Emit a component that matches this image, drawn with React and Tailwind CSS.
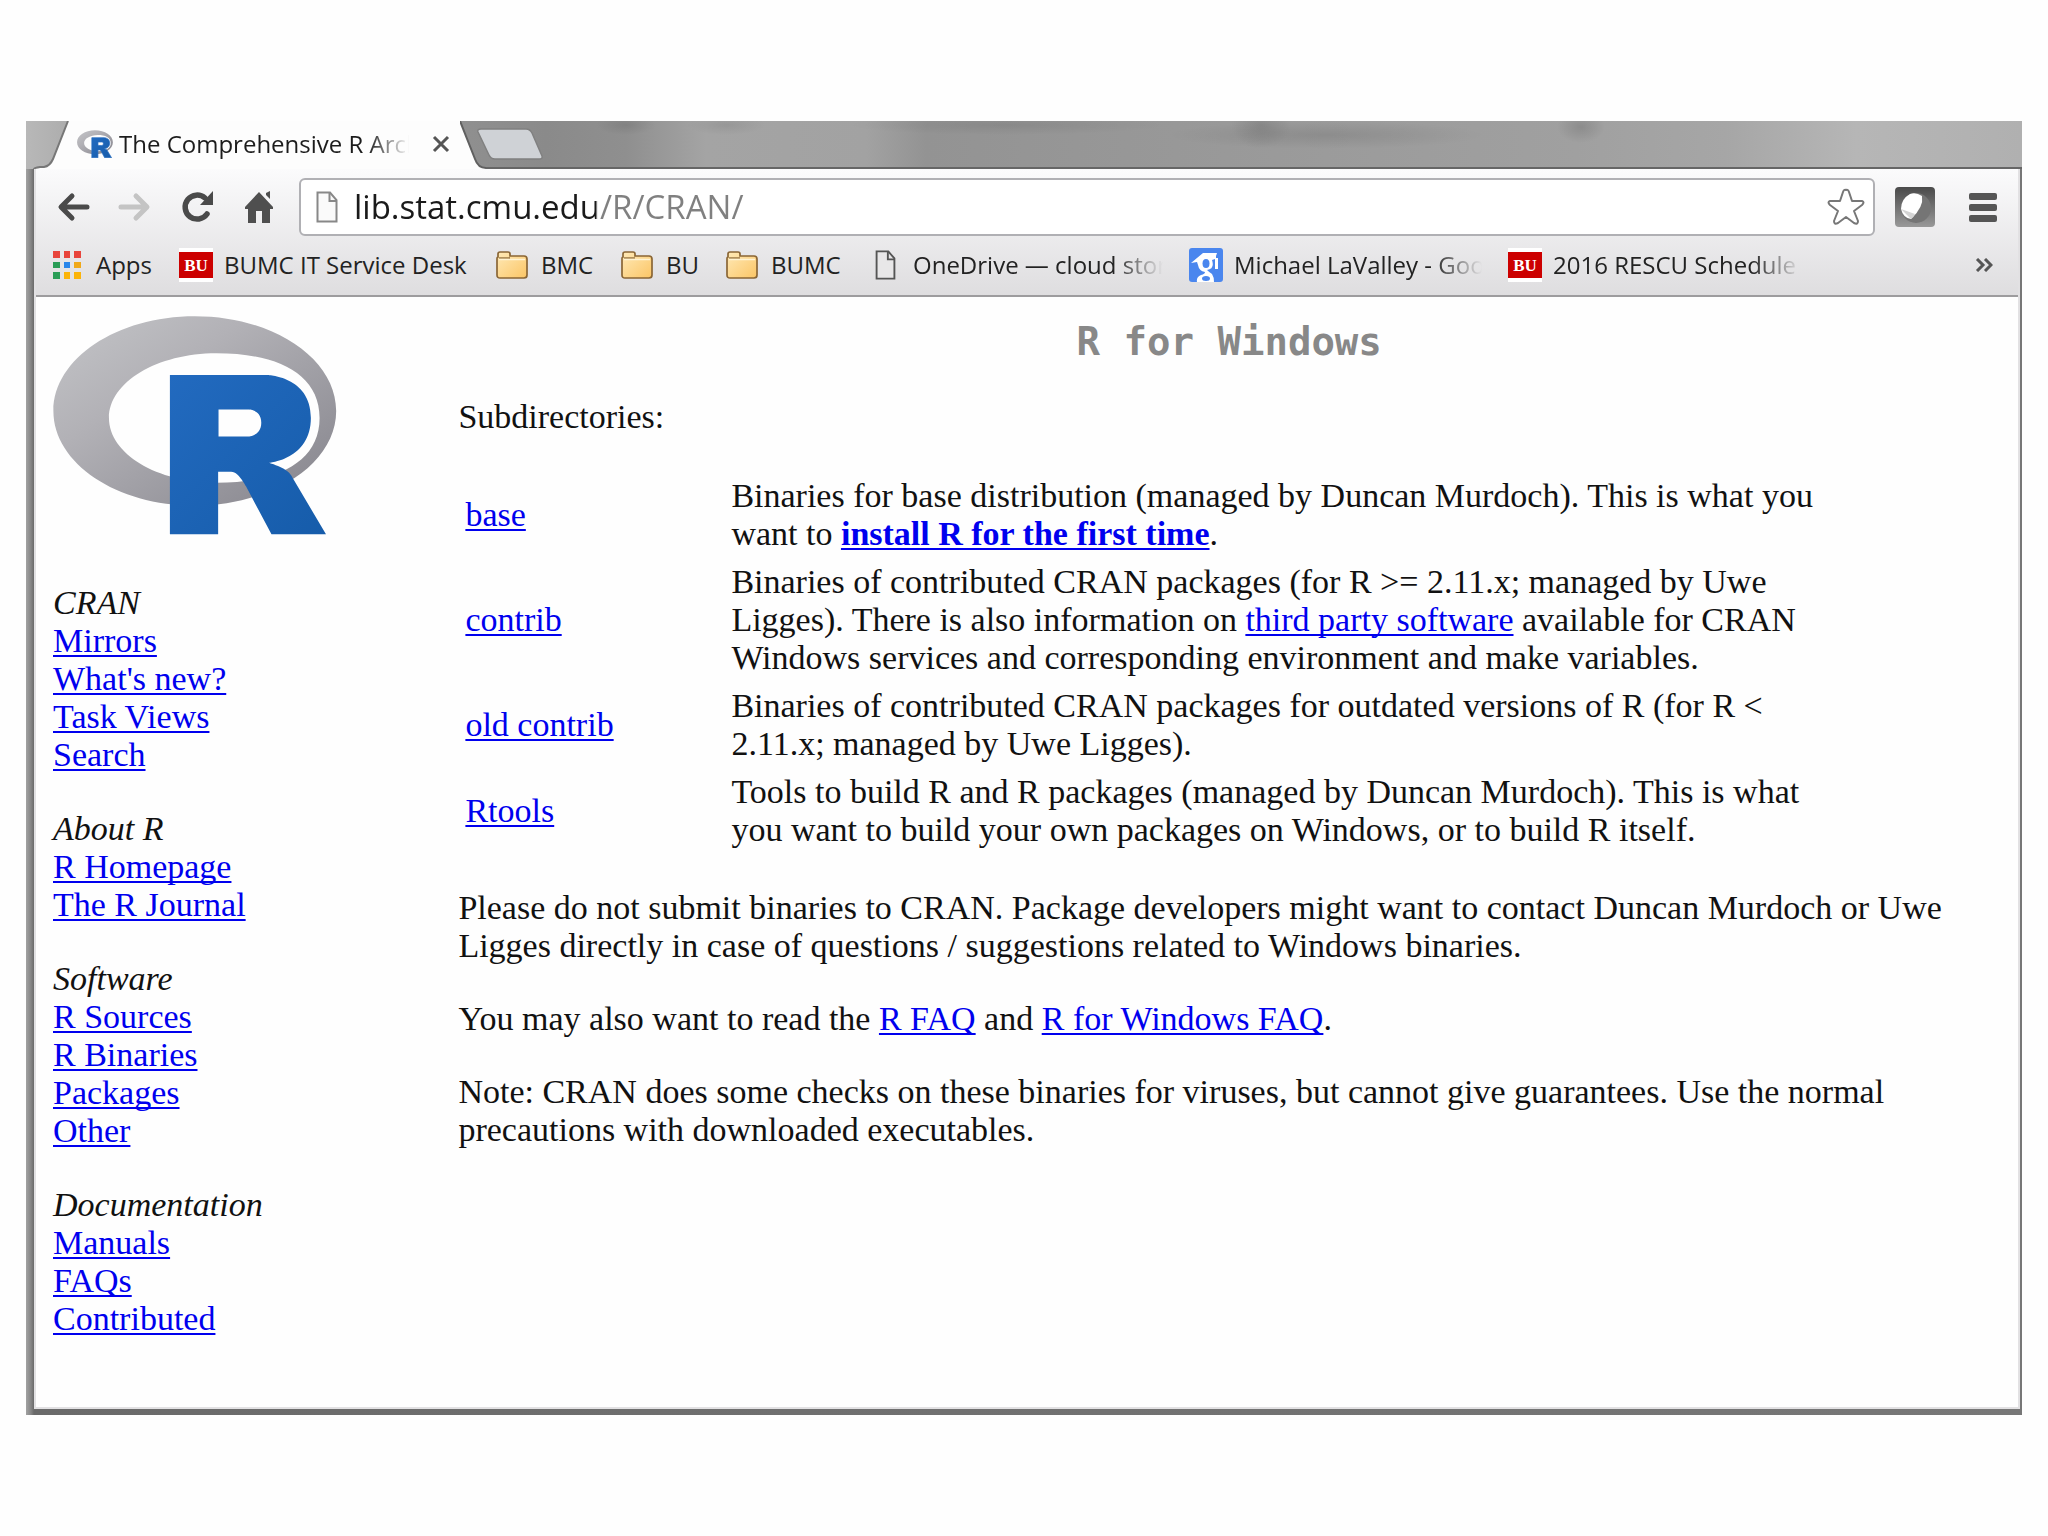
const SANS = 'font-["Open_Sans","Noto_Sans",sans-serif]';

function RLogo({ className, id, flat }) {
  return (
    <svg viewBox="0 0 724 561" className={className} role="img" aria-label="R logo">
      <defs>
        <linearGradient id={id + 'g'} x1="0" y1="0" x2="1" y2="1">
          <stop offset="0" stopColor="#c4c5c8" />
          <stop offset="0.35" stopColor="#b2b1b6" />
          <stop offset="1" stopColor="#84838b" />
        </linearGradient>
        <linearGradient id={id + 'b'} x1="0" y1="0" x2="1" y2="1">
          <stop offset="0" stopColor="#226abf" />
          <stop offset="1" stopColor="#165caa" />
        </linearGradient>
      </defs>
      <path
        fill={`url(#${id}g)`}
        fillRule="evenodd"
        d="M361.5 486C162.300 486 .9 377.800 .9 244.500S162.300 3 361.500 3 722 111.100 722 244.500 560.600 486 361.500 486ZM416.600 97.400C265.300 97.400 142.600 171.300 142.600 262.500S265.300 427.600 416.600 427.600 679.700 377 679.700 262.500 568 97.400 416.600 97.400Z"
      />
      <path
        fill={`url(#${id}b)`}
        stroke={flat ? '#276dc3' : 'none'}
        strokeWidth={flat ? 14 : 0}
        fillRule="evenodd"
        d="M550 377s21.800 6.600 34.500 13c4.400 2.200 12 6.700 17.500 12.500 5.400 5.700 8 11.500 8 11.500l86 145H557l-65-122s-13.300-22.900-21.500-29.500c-6.800-5.500-9.700-7.500-16.500-7.500h-33v159H298V153h247s112.500 2 112.500 109S550 377 550 377Zm-53.500-136H422v69h74.500s34.500-.1 34.500-35.100c0-35.700-34.500-33.900-34.500-33.900Z"
      />
    </svg>
  );
}

function PageIcon({ className, fill = '#fafafa', stroke = '#777' }) {
  return (
    <svg viewBox="0 0 22 32" className={className} aria-hidden="true">
      <path d="M1.500 1.500H14L20.500 9V30.500H1.500Z" fill={fill} stroke={stroke} strokeWidth="2" />
      <path d="M13.500 1.500V10H20.500" fill="none" stroke={stroke} strokeWidth="2" />
    </svg>
  );
}

function FolderIcon() {
  return (
    <svg viewBox="0 0 32 28" className="h-7 w-8 shrink-0" aria-hidden="true">
      <defs>
        <linearGradient id="folder" x1="0" y1="0" x2="1" y2="1">
          <stop offset="0" stopColor="#ffeab8" />
          <stop offset="1" stopColor="#fbc565" />
        </linearGradient>
      </defs>
      <path d="M2 6V3Q2 1 4 1H12Q14 1 14 3V5H28Q31 5 31 8V24Q31 27 28 27H4Q1 27 1 24V8Q1 6 2 6Z" fill="url(#folder)" stroke="#8a6635" strokeWidth="1.700" />
      <path d="M3 7H14" stroke="#8a6635" strokeWidth="1.300" />
      <path d="M3 8.500H29" stroke="#fff3d2" strokeWidth="1.500" />
    </svg>
  );
}

function BuIcon() {
  return (
    <span aria-hidden="true" className="flex h-[34px] w-[34px] shrink-0 flex-col justify-center bg-white">
      <span className='flex h-[26px] items-center justify-center bg-[#cc0000] font-["Liberation_Serif",serif] text-[17px] leading-none font-bold text-white'>
        BU
      </span>
    </span>
  );
}

function ScholarIcon() {
  return (
    <svg viewBox="0 0 34 34" className="h-[34px] w-[34px] shrink-0" aria-hidden="true">
      <rect width="34" height="34" rx="3" fill="#4a86ee" />
      <path d="M2 15L14 5H28L27 8V10H29V21H26V11L23 12Q26 21 18 22Q20 24 23 26Q25 29 25 34H8Q7 29 12 27Q16 26 16 24Q10 23 9 17L8 14Z" fill="#fff" />
      <ellipse cx="17" cy="15.500" rx="3.500" ry="4.500" fill="#4a86ee" />
      <ellipse cx="17" cy="30.500" rx="4" ry="2.500" fill="#4a86ee" />
    </svg>
  );
}

function AppsIcon() {
  const colors = ['#e8453c', '#e8453c', '#e8453c', '#2a9d57', '#2a86ea', '#f0a818', '#2a9d57', '#fbb40a', '#fbb40a'];
  return (
    <span aria-hidden="true" className="grid h-7 w-7 shrink-0 grid-cols-3 gap-1">
      {colors.map((c, i) => (
        <span key={i} style={{ backgroundColor: c }} />
      ))}
    </span>
  );
}

const FADE = '[mask-image:linear-gradient(to_right,black_80%,transparent)]';

const bookmarks = [
  { label: 'Apps', icon: <AppsIcon />, width: 'w-[57px]', gap: 'gap-[15px]' },
  { label: 'BUMC IT Service Desk', icon: <BuIcon />, width: 'w-[246px]', gap: 'gap-[11px]' },
  { label: 'BMC', icon: <FolderIcon />, width: 'w-[54px]', gap: 'gap-[13px]' },
  { label: 'BU', icon: <FolderIcon />, width: 'w-[34px]', gap: 'gap-[13px]' },
  { label: 'BUMC', icon: <FolderIcon />, width: 'w-[74px]', gap: 'gap-[13px]' },
  { label: 'OneDrive — cloud storage', icon: <PageIcon className="mx-1 h-[30px] w-[21px] shrink-0" fill="#e8e7e8" stroke="#555" />, width: 'w-[250px]', gap: 'gap-[13px]', fade: true },
  { label: 'Michael LaValley - Google', icon: <ScholarIcon />, width: 'w-[248px]', gap: 'gap-[11px]', fade: true },
  { label: '2016 RESCU Schedule', icon: <BuIcon />, width: 'w-[248px]', gap: 'gap-[11px]', fade: true },
];

const navGroups = [
  { title: 'CRAN', links: ['Mirrors', "What's new?", 'Task Views', 'Search'] },
  { title: 'About R', links: ['R Homepage', 'The R Journal'] },
  { title: 'Software', links: ['R Sources', 'R Binaries', 'Packages', 'Other'] },
  { title: 'Documentation', links: ['Manuals', 'FAQs', 'Contributed'] },
];

function Link({ children, className = '' }) {
  return (
    <a href="#" className={`text-[#0000ee] underline decoration-2 underline-offset-[3px] [text-decoration-skip-ink:none] ${className}`}>
      {children}
    </a>
  );
}

const directories = [
  {
    name: 'base',
    text: (
      <>
        Binaries for base distribution (managed by Duncan Murdoch). This is what you want to{' '}
        <Link className="font-bold">install R for the first time</Link>.
      </>
    ),
  },
  {
    name: 'contrib',
    text: (
      <>
        Binaries of contributed CRAN packages (for R &gt;= 2.11.x; managed by Uwe Ligges). There is also information on{' '}
        <Link>third party software</Link> available for CRAN Windows services and corresponding environment and make variables.
      </>
    ),
  },
  {
    name: 'old contrib',
    text: 'Binaries of contributed CRAN packages for outdated versions of R (for R < 2.11.x; managed by Uwe Ligges).',
  },
  {
    name: 'Rtools',
    text: 'Tools to build R and R packages (managed by Duncan Murdoch). This is what you want to build your own packages on Windows, or to build R itself.',
  },
];

function TabStrip() {
  return (
    <div className="flex h-12 bg-[radial-gradient(ellipse_160px_14px_at_1300px_14px,#00000018,transparent),radial-gradient(ellipse_30px_24px_at_1235px_4px,#0000001c,transparent),radial-gradient(ellipse_24px_16px_at_1555px_6px,#00000020,transparent),radial-gradient(ellipse_30px_10px_at_600px_4px,#00000018,transparent),radial-gradient(ellipse_40px_10px_at_700px_4px,#00000014,transparent),radial-gradient(ellipse_160px_10px_at_980px_4px,#00000014,transparent),linear-gradient(to_right,#b8b8b8_0,#a8a8a8_60px,#8a8a8a_520px,#8f8f8f_600px,#a4a4a4_680px,#a2a2a2_840px,#939393_900px,#999_1200px,#a0a0a0_1550px,#a6a6a6_1700px,#b6b6b6_1830px,#b0b0b0)] pl-[7px]">
      <svg viewBox="0 0 36 48" className="h-12 w-9 shrink-0" aria-hidden="true">
        <path d="M36 0H35L20 38Q17 45 11 46H7Q1 47 1 48H36Z" fill="#fdfdfd" />
        <path d="M35 0L20 38Q17 45 11 46H7Q1 47 1 48" fill="none" stroke="#777" strokeWidth="2" />
      </svg>
      <div role="tab" className="flex w-[391px] shrink-0 items-center bg-[#fdfdfd] pb-0.5 pl-2">
        <RLogo className="h-7 w-9 shrink-0" id="fav" flat />
        <span className="ml-[6px] w-[296px] overflow-hidden text-[24px] leading-8 whitespace-nowrap text-[#1c1c1c] [mask-image:linear-gradient(to_right,black_84%,transparent_98%)]">
          The Comprehensive R Archive
        </span>
        <button type="button" aria-label="Close tab" className="ml-[17px] shrink-0">
          <svg viewBox="0 0 18 18" className="h-[18px] w-[18px]" aria-hidden="true">
            <path d="M2 2L16 16M16 2L2 16" stroke="#555" strokeWidth="3" />
          </svg>
        </button>
      </div>
      <svg viewBox="0 0 26 48" className="h-12 w-[26px] shrink-0" aria-hidden="true">
        <path d="M0 0L15 38Q18 47 26 47V48H0Z" fill="#fdfdfd" />
        <path d="M0 0L15 38Q18 47 26 47" fill="none" stroke="#606060" strokeWidth="2" />
      </svg>
      <div className="flex grow border-b-2 border-[#666]">
        <button type="button" aria-label="New tab" className="mt-[7px] -ml-[10px] h-8">
          <svg viewBox="0 0 68 32" className="h-8 w-[68px]" aria-hidden="true">
            <path d="M5 1H50Q54 1 56 5L66 28Q67 31 63 31H19Q15 31 13 27L2 4Q1 1 5 1Z" fill="#cfd2d6" stroke="#808080" strokeWidth="1.500" />
          </svg>
        </button>
      </div>
    </div>
  );
}

function Toolbar() {
  return (
    <div className="flex h-[72px] items-center pt-1 pr-[21px] pl-5">
      <div className="flex shrink-0 items-center">
        <button type="button" aria-label="Back">
          <svg viewBox="0 0 34 32" className="h-8 w-[34px]" fill="none" stroke="#4a4a4a" strokeWidth="5" strokeLinecap="round" strokeLinejoin="round">
            <path d="M16 5L5 16L16 27M6 16H31" />
          </svg>
        </button>
        <button type="button" aria-label="Forward" className="ml-7" disabled>
          <svg viewBox="0 0 34 32" className="h-8 w-[34px]" fill="none" stroke="#c4c4c4" strokeWidth="5" strokeLinecap="round" strokeLinejoin="round">
            <path d="M18 5L29 16L18 27M28 16H3" />
          </svg>
        </button>
        <button type="button" aria-label="Reload" className="ml-7">
          <svg viewBox="0 0 34 32" className="h-8 w-[34px]">
            <path d="M27 23A12 12 0 1 1 25 7" fill="none" stroke="#4a4a4a" strokeWidth="5.500" strokeLinecap="round" />
            <path d="M33 0V14H20Z" fill="#4a4a4a" />
          </svg>
        </button>
        <button type="button" aria-label="Home" className="ml-[30px]">
          <svg viewBox="0 0 30 32" className="h-8 w-[30px]">
            <path d="M15 1L29 16V18H26V32H18V20H12V32H4V18H1V16Z" fill="#4f4f4f" />
            <path d="M22 2L26 0V8L22 4Z" fill="#4f4f4f" />
          </svg>
        </button>
      </div>
      <form className="ml-[25px] flex h-[58px] grow items-center rounded-md border-2 border-[#b0b0b4] bg-white pr-2 pl-[15px]">
        <PageIcon className="h-8 w-[22px] shrink-0" stroke="#888" />
        <input
          type="text"
          aria-label="Address"
          defaultValue="lib.stat.cmu.edu/R/CRAN/"
          className="ml-4 min-w-0 grow bg-[linear-gradient(to_right,#1a1a1a_242px,#808080_242px)] bg-clip-text text-[33px] leading-10 text-transparent outline-none"
        />
        <button type="button" aria-label="Bookmark this page">
          <svg viewBox="0 0 38 38" className="h-[38px] w-[38px]" fill="#fff" stroke="#777" strokeWidth="2" strokeLinejoin="round">
            <path d="M19 2Q21 1 22 4L25 13L35 13Q38 14 35 17L27 23L31 33Q31 37 27 35L19 29L11 35Q7 37 7 33L11 23L3 17Q0 14 3 13L13 13L16 4Q17 1 19 2Z" />
          </svg>
        </button>
      </form>
      <button type="button" aria-label="Extension" className="ml-5 shrink-0">
        <svg viewBox="0 0 40 40" className="h-10 w-10">
          <defs>
            <linearGradient id="ext" x1="0" y1="0" x2="0" y2="1">
              <stop offset="0" stopColor="#4a4a4a" />
              <stop offset="1" stopColor="#999" />
            </linearGradient>
          </defs>
          <rect width="40" height="40" rx="4" fill="url(#ext)" />
          <circle cx="21" cy="21" r="15" fill="#757575" />
          <path d="M15 7Q21 5 27 9Q29 20 16 32Q8 31 6 22Q6 12 15 7Z" fill="#fff" />
          <path d="M6 22L16 32Q19 30 20 27Z" fill="#d4d4d4" />
        </svg>
      </button>
      <button type="button" aria-label="Menu" className="ml-[34px] flex shrink-0 flex-col gap-1">
        <span className="h-[7px] w-7 rounded-xs bg-[#555]" />
        <span className="h-[7px] w-7 rounded-xs bg-[#555]" />
        <span className="h-[7px] w-7 rounded-xs bg-[#555]" />
      </button>
    </div>
  );
}

function BookmarksBar() {
  return (
    <nav aria-label="Bookmarks" className="flex h-14 items-center border-b-2 border-[#9d9c9e] pr-[25px] pb-1.5 pl-[17px]">
      <div className="flex min-w-0 grow items-center gap-[26px]">
        {bookmarks.map((b) => (
          <a key={b.label} href="#" className={`flex shrink-0 items-center ${b.gap}`}>
            {b.icon}
            <span className={`${b.width} whitespace-nowrap text-[24px] leading-8 text-[#222] ${b.fade ? 'overflow-hidden ' + FADE : ''}`}>
              {b.label}
            </span>
          </a>
        ))}
      </div>
      <button type="button" aria-label="More bookmarks" className="shrink-0">
        <svg viewBox="0 0 18 14" className="h-3.5 w-[18px]" fill="none" stroke="#555" strokeWidth="3">
          <path d="M2 1L8 7L2 13M10 1L16 7L10 13" />
        </svg>
      </button>
    </nav>
  );
}

function Sidebar() {
  return (
    <aside className="w-1/5 shrink-0 pt-[18px] pl-[17px]">
      <RLogo className="h-[220px] w-[284px]" id="logo" />
      <div className="mt-12 flex flex-col gap-[35px]">
        {navGroups.map((g) => (
          <section key={g.title}>
            <h2 className="leading-[39px] italic">{g.title}</h2>
            <ul>
              {g.links.map((l) => (
                <li key={l}>
                  <Link>{l}</Link>
                </li>
              ))}
            </ul>
          </section>
        ))}
      </div>
    </aside>
  );
}

export default function App() {
  return (
    <div className={`flex min-h-screen flex-col bg-[#fefefe] px-[26px] py-[121px] ${SANS}`}>
      <div className="flex grow flex-col">
        <TabStrip />
        <div className="flex grow flex-col bg-[linear-gradient(to_right,#a2a2a2,#858585_5px,#6a6a6a_8px,#777)] pr-0.5 pb-1.5 pl-2">
          <div className="flex grow flex-col border-r-2 border-b-2 border-l-2 border-[#e2e1e3] bg-white">
            <header className="bg-linear-to-b from-[#fbfbfc] to-[#dedddf]">
              <Toolbar />
              <BookmarksBar />
            </header>
            <div className='flex grow bg-[#fefefe] font-["Liberation_Serif",serif] text-[34px] leading-[38px] text-[#111]'>
              <Sidebar />
              <main className="grow pt-[23px] pr-[18px] pl-[26px]">
                <h1 className='text-center font-["DejaVu_Sans_Mono",monospace] text-[39px] leading-[44px] font-bold text-[#888]'>R for Windows</h1>
                <p className="mt-[34px]">Subdirectories:</p>
                <table className="mt-9 w-[90%] table-fixed">
                  <colgroup>
                    <col className="w-[266px]" />
                    <col />
                  </colgroup>
                  <tbody>
                    {directories.map((d) => (
                      <tr key={d.name}>
                        <td className="px-[7px] py-[5px] align-middle">
                          <Link>{d.name}</Link>
                        </td>
                        <td className="px-[7px] py-[5px]">{d.text}</td>
                      </tr>
                    ))}
                  </tbody>
                </table>
                <div className="mt-[35px] flex flex-col gap-[35px]">
                  <p>
                    Please do not submit binaries to CRAN. Package developers might want to contact Duncan Murdoch or Uwe Ligges directly in case of
                    questions / suggestions related to Windows binaries.
                  </p>
                  <p>
                    You may also want to read the <Link>R FAQ</Link> and <Link>R for Windows FAQ</Link>.
                  </p>
                  <p>
                    Note: CRAN does some checks on these binaries for viruses, but cannot give guarantees. Use the normal precautions with downloaded
                    executables.
                  </p>
                </div>
              </main>
            </div>
          </div>
        </div>
      </div>
    </div>
  );
}
